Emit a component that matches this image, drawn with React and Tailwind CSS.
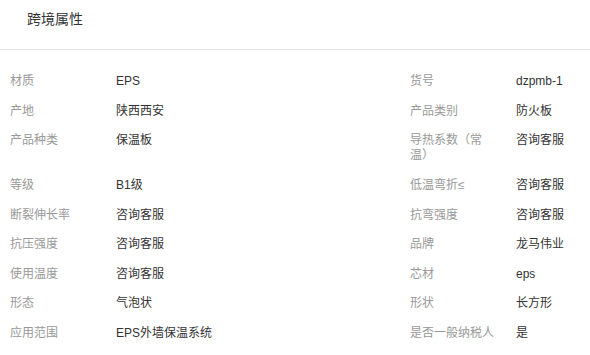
const left = [
  ["材质", "EPS"],
  ["产地", "陕西西安"],
  ["产品种类", "保温板"],
  ["等级", "B1级"],
  ["断裂伸长率", "咨询客服"],
  ["抗压强度", "咨询客服"],
  ["使用温度", "咨询客服"],
  ["形态", "气泡状"],
  ["应用范围", "EPS外墙保温系统"],
];

const right = [
  ["货号", "dzpmb-1"],
  ["产品类别", "防火板"],
  ["导热系数（常温）", "咨询客服"],
  ["低温弯折≤", "咨询客服"],
  ["抗弯强度", "咨询客服"],
  ["品牌", "龙马伟业"],
  ["芯材", "eps"],
  ["形状", "长方形"],
  ["是否一般纳税人", "是"],
];

const Cell = ({ label, value }) => (
  <div className="flex py-[7.3px] leading-[15px]">
    <div className="w-[90px] mr-[16px] shrink-0 text-[#999]">{label}</div>
    <div className="text-[#333]">{value}</div>
  </div>
);

export default function App() {
  return (
    <div
      className="w-[590px] h-[355px] bg-white overflow-hidden text-[12px]"
      style={{ fontFamily: '"Liberation Sans", "Noto Sans CJK SC", sans-serif' }}
    >
      <div className="h-[50px] border-b border-[#e5e5e5] pl-[27px] pt-[9px] text-[14px] leading-5 text-[#333]">
        跨境属性
      </div>
      <div className="pt-[17px]">
        {left.map((row, i) => (
          <div key={i} className="flex">
            <div className="w-[400px] pl-[10px]">
              <Cell label={row[0]} value={row[1]} />
            </div>
            <div className="flex-1 pl-[10px]">
              <Cell label={right[i][0]} value={right[i][1]} />
            </div>
          </div>
        ))}
      </div>
    </div>
  );
}
